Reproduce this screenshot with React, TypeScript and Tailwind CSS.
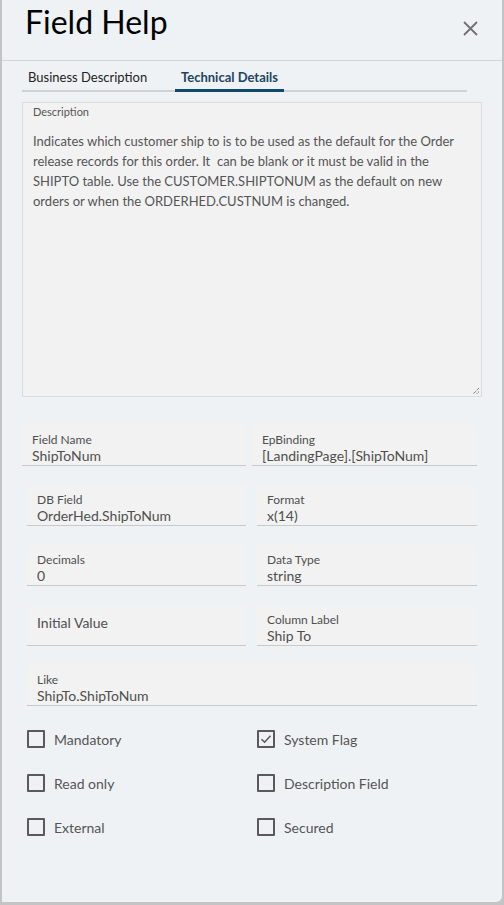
import React from "react";

const font = { fontFamily: "Lato, 'Open Sans', sans-serif" };

type FieldProps = { label: string; value?: string; className?: string };

function Field({ label, value, className = "" }: FieldProps) {
  return (
    <div className={`h-[41px] bg-[#f2f2f2] border-b border-[#c9c9c9] px-[10px] ${className}`}>
      {value !== undefined ? (
        <>
          <div className="pt-[8px] text-[12px] leading-[14px] text-[#4f4f4f]">{label}</div>
          <div className="text-[14px] leading-[18px] text-[#4f4f4f]">{value}</div>
        </>
      ) : (
        <div className="pt-[9px] text-[14px] leading-[18px] text-[#4f4f4f]">{label}</div>
      )}
    </div>
  );
}

function Check({ label, checked = false }: { label: string; checked?: boolean }) {
  return (
    <div className="flex items-center h-[18px]">
      <span className="w-[18px] h-[18px] border-2 border-[#5a5a5a] rounded-[1px] flex items-center justify-center">
        {checked && (
          <svg width="12" height="12" viewBox="0 0 12 12" fill="none">
            <path d="M1.5 6.2 L4.6 9.2 L10.5 2.8" stroke="#5a5a5a" strokeWidth="1.6" />
          </svg>
        )}
      </span>
      <span className="ml-[9px] text-[14px] text-[#555]">{label}</span>
    </div>
  );
}

export default function App() {
  return (
    <div className="w-[504px] h-[905px] bg-[#c4c4c4] overflow-hidden" style={font}>
      <div className="ml-[2px] w-[500px] h-[902px] bg-[#eff2f5] rounded-br-[6px] flex flex-col">
        {/* header */}
        <div className="h-[61px] border-b border-[#d2d5d8] flex items-start justify-between">
          <h1 className="ml-[23px] mt-[2px] text-[32px] leading-[40px] text-black">Field Help</h1>
          <button className="mr-[24px] mt-[20px] w-[16px] h-[16px] flex items-center justify-center">
            <svg width="15" height="15" viewBox="0 0 15 15">
              <path d="M1 1 L14 14 M14 1 L1 14" stroke="#707070" strokeWidth="1.8" />
            </svg>
          </button>
        </div>

        {/* tabs */}
        <div className="ml-[20px] w-[445px] h-[31px] border-b-2 border-[#d0d3d6] flex items-end text-[13px]">
          <div className="pl-[6px] pt-[4px] w-[153px] h-full flex items-center text-[#222]">Business Description</div>
          <div className="px-[6px] pt-[3px] h-full flex items-center border-b-[3px] border-[#11486b] -mb-[2px] font-bold text-[#1d4461]">
            Technical Details
          </div>
        </div>

        {/* description */}
        <div className="ml-[20px] mt-[10px] w-[460px] h-[295px] bg-[#f2f2f2] border border-[#dcdcdc] relative">
          <div className="pl-[10px] pt-[2px] text-[11px] leading-[14px] text-[#555]">Description</div>
          <p className="pl-[10px] pt-[12px] text-[13px] leading-[20px] text-[#555]">
            Indicates which customer ship to is to be used as the default for the Order
            <br />
            release records for this order. It&nbsp; can be blank or it must be valid in the
            <br />
            SHIPTO table. Use the CUSTOMER.SHIPTONUM as the default on new
            <br />
            orders or when the ORDERHED.CUSTNUM is changed.
          </p>
          <svg className="absolute right-[1px] bottom-[1px]" width="8" height="8" viewBox="0 0 8 8">
            <path d="M7 1 L1 7 M7 4.5 L4.5 7" stroke="#444" strokeWidth="1" strokeDasharray="1 1" />
          </svg>
        </div>

        {/* fields */}
        <div className="mt-[28px] ml-[20px] flex gap-[6px]">
          <Field label="Field Name" value="ShipToNum" className="w-[224px]" />
          <Field label="EpBinding" value="[LandingPage].[ShipToNum]" className="w-[225px]" />
        </div>
        <div className="mt-[19px] ml-[25px] flex gap-[11px]">
          <Field label="DB Field" value="OrderHed.ShipToNum" className="w-[219px]" />
          <Field label="Format" value="x(14)" className="w-[220px]" />
        </div>
        <div className="mt-[19px] ml-[25px] flex gap-[11px]">
          <Field label="Decimals" value="0" className="w-[219px]" />
          <Field label="Data Type" value="string" className="w-[220px]" />
        </div>
        <div className="mt-[19px] ml-[25px] flex gap-[11px]">
          <Field label="Initial Value" className="w-[219px]" />
          <Field label="Column Label" value="Ship To" className="w-[220px]" />
        </div>
        <div className="mt-[19px] ml-[25px]">
          <Field label="Like" value="ShipTo.ShipToNum" className="w-[450px]" />
        </div>

        {/* flags */}
        <div className="mt-[24px] ml-[25px] grid grid-cols-[230px_1fr] gap-y-[26px]">
          <Check label="Mandatory" />
          <Check label="System Flag" checked />
          <Check label="Read only" />
          <Check label="Description Field" />
          <Check label="External" />
          <Check label="Secured" />
        </div>
      </div>
    </div>
  );
}
